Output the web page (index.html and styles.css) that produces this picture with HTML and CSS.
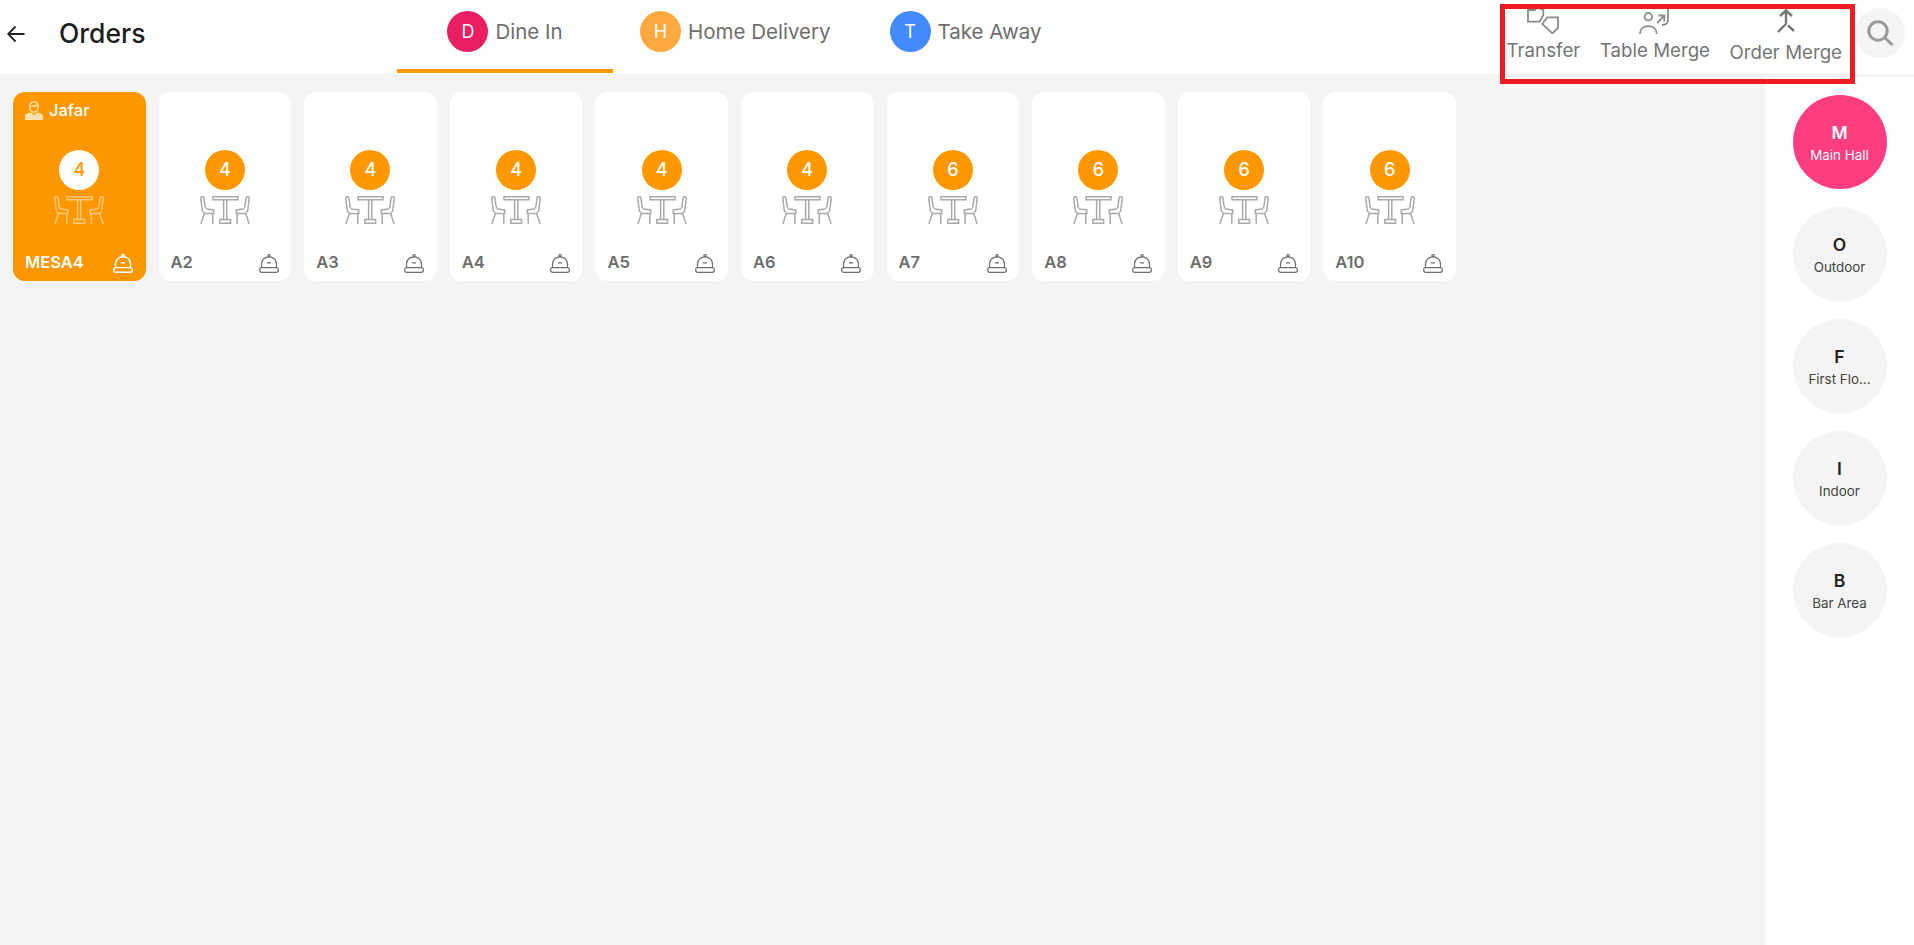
FILE: index.html
```html
<!DOCTYPE html>
<html lang="en">
<head>
  <meta charset="UTF-8">
  <meta name="viewport" content="width=device-width, initial-scale=1.0">
  <title>Orders</title>
  <link rel="stylesheet" href="styles.css">
</head>
<body>
  <svg class="svg-defs" width="0" height="0" aria-hidden="true">
    <symbol id="seat" viewBox="0 0 50 28">
      <path d="M13 .7H38V3.7H13ZM23.6 3.7V23.5M26.8 3.7V23.5M19.8 23.5H30.6V27.2H19.8Z"/>
      <g id="chair">
        <path d="M1.5.8Q3.6.4 4 2.2L5 10Q5.3 12.6 7 13L13.7 14V17.5H5.2Q2.6 17 2.1 13L.8 3Q.7 1.1 1.5.8ZM4.4 17.5L.8 28M12.8 17.5V28"/>
      </g>
      <use href="#chair" transform="matrix(-1 0 0 1 50 0)"/>
    </symbol>
    <symbol id="bell" viewBox="0 0 20 19">
      <circle cx="10" cy="1.6" r="1.1"/>
      <path d="M2.5 13.6V10C2.5 5.6 6 2.8 10 2.8S17.5 5.6 17.5 10V13.6M8 8.8H12"/>
      <rect x=".7" y="13.6" width="18.6" height="4.7" rx="2"/>
    </symbol>
  </svg>

  <header class="topbar">
    <a href="#" class="back-link">
      <svg width="18" height="18" viewBox="0 0 18 18"><path d="M17.5 9H1.5M8.5 1.5L1.2 9L8.5 16.5"/></svg>
    </a>
    <h1 class="page-title">Orders</h1>

    <nav class="tabs">
      <a href="#" class="tab tab-active"><span class="tab-dot dot-dine">D</span>Dine In</a>
      <a href="#" class="tab"><span class="tab-dot dot-home">H</span>Home Delivery</a>
      <a href="#" class="tab"><span class="tab-dot dot-take">T</span>Take Away</a>
    </nav>

    <div class="actions">
      <a href="#" class="action">
        <svg class="action-icon" width="32" height="30" viewBox="0 0 32 30"><path d="M1 6V17.7H12.7L16.3 11V6L9.5 3.5L8 6ZM20.3 13.3H31V24L25.3 29.3L15.3 20Z"/></svg>
        <span class="action-label">Transfer</span>
      </a>
      <a href="#" class="action">
        <svg class="action-icon" width="31" height="30" viewBox="0 0 31 30"><circle cx="9.3" cy="12.7" r="3.7"/><path d="M.9 30C.9 25 4.5 22.2 9.3 22.2S17.7 25 17.7 30M18 19L25 12M19.5 11.5H25.3V17.5M29 1V15.5Q29 21 23 21"/></svg>
        <span class="action-label">Table Merge</span>
      </a>
      <a href="#" class="action action-order">
        <svg class="action-icon icon-dark" width="18" height="30" viewBox="0 0 18 30"><path d="M9 7V20M3 12L9 6.5L15 12M9 20L1 28M11 21.5L17 27"/></svg>
        <span class="action-label">Order Merge</span>
      </a>
    </div>

    <a href="#" class="search-btn">
      <svg width="28" height="28" viewBox="0 0 28 28"><circle cx="12" cy="12" r="9.2"/><path d="M19 19L26.5 26"/></svg>
    </a>
  </header>

  <div class="layout">
    <main class="tables">
      <div class="table-card table-busy">
        <div class="card-user">
          <svg width="18" height="19" viewBox="0 0 18 19"><path class="user-fill" d="M0 19V15.5Q0 13 3 12.3L6 11.5L9 14L12 11.5L15 12.3Q18 13 18 15.5V19Z"/><path class="user-line" d="M4.6 6.2C4.6 2.5 6.5 .8 9 .8S13.4 2.5 13.4 6.2C13.4 9 11.2 11.3 9 11.3S4.6 9 4.6 6.2ZM5 5Q9 5.5 13 4"/></svg>
          <span>Jafar</span>
        </div>
        <span class="seat-count">4</span>
        <svg class="seat-icon"><use href="#seat"/></svg>
        <div class="card-foot">
          <span class="table-name">MESA4</span>
          <svg class="bell-icon"><use href="#bell"/></svg>
        </div>
      </div>

      <div class="table-card">
        <div class="card-user"></div>
        <span class="seat-count">4</span>
        <svg class="seat-icon"><use href="#seat"/></svg>
        <div class="card-foot"><span class="table-name">A2</span><svg class="bell-icon"><use href="#bell"/></svg></div>
      </div>
      <div class="table-card">
        <div class="card-user"></div>
        <span class="seat-count">4</span>
        <svg class="seat-icon"><use href="#seat"/></svg>
        <div class="card-foot"><span class="table-name">A3</span><svg class="bell-icon"><use href="#bell"/></svg></div>
      </div>
      <div class="table-card">
        <div class="card-user"></div>
        <span class="seat-count">4</span>
        <svg class="seat-icon"><use href="#seat"/></svg>
        <div class="card-foot"><span class="table-name">A4</span><svg class="bell-icon"><use href="#bell"/></svg></div>
      </div>
      <div class="table-card">
        <div class="card-user"></div>
        <span class="seat-count">4</span>
        <svg class="seat-icon"><use href="#seat"/></svg>
        <div class="card-foot"><span class="table-name">A5</span><svg class="bell-icon"><use href="#bell"/></svg></div>
      </div>
      <div class="table-card">
        <div class="card-user"></div>
        <span class="seat-count">4</span>
        <svg class="seat-icon"><use href="#seat"/></svg>
        <div class="card-foot"><span class="table-name">A6</span><svg class="bell-icon"><use href="#bell"/></svg></div>
      </div>
      <div class="table-card">
        <div class="card-user"></div>
        <span class="seat-count">6</span>
        <svg class="seat-icon"><use href="#seat"/></svg>
        <div class="card-foot"><span class="table-name">A7</span><svg class="bell-icon"><use href="#bell"/></svg></div>
      </div>
      <div class="table-card">
        <div class="card-user"></div>
        <span class="seat-count">6</span>
        <svg class="seat-icon"><use href="#seat"/></svg>
        <div class="card-foot"><span class="table-name">A8</span><svg class="bell-icon"><use href="#bell"/></svg></div>
      </div>
      <div class="table-card">
        <div class="card-user"></div>
        <span class="seat-count">6</span>
        <svg class="seat-icon"><use href="#seat"/></svg>
        <div class="card-foot"><span class="table-name">A9</span><svg class="bell-icon"><use href="#bell"/></svg></div>
      </div>
      <div class="table-card">
        <div class="card-user"></div>
        <span class="seat-count">6</span>
        <svg class="seat-icon"><use href="#seat"/></svg>
        <div class="card-foot"><span class="table-name">A10</span><svg class="bell-icon"><use href="#bell"/></svg></div>
      </div>
    </main>

    <aside class="areas">
      <a href="#" class="area area-active"><strong>M</strong><span>Main Hall</span></a>
      <a href="#" class="area"><strong>O</strong><span>Outdoor</span></a>
      <a href="#" class="area"><strong>F</strong><span>First Flo...</span></a>
      <a href="#" class="area"><strong>I</strong><span>Indoor</span></a>
      <a href="#" class="area"><strong>B</strong><span>Bar Area</span></a>
    </aside>
  </div>

  <!-- Marcação vermelha sobre as ações -->
  <div class="highlight"></div>
</body>
</html>
```

FILE: styles.css
```css
* {
  box-sizing: border-box;
}
body {
  font-family: Inter, "Noto Sans", sans-serif;
  background-color: #f4f4f4;
  margin: 0;
  height: 100vh;
  overflow: hidden;
  display: flex;
  flex-direction: column;
}
a {
  color: inherit;
  text-decoration: none;
}
.svg-defs {
  position: absolute;
}
.topbar {
  display: flex;
  flex: none;
  height: 74px;
  background-color: white;
}
.back-link {
  margin: 25px 0 0 7px;
  width: 18px;
  height: 18px;
}
.back-link svg {
  display: block;
  fill: none;
  stroke: #222;
  stroke-width: 1.8;
}
.page-title {
  margin: 17px 0 0 34px;
  width: 338px;
  font-size: 26.5px;
  line-height: 32px;
  font-weight: 500;
  color: #1f1f1f;
}
.tabs {
  display: flex;
  gap: 2px;
}
.tab {
  display: flex;
  align-items: flex-start;
  justify-content: center;
  gap: 7px;
  min-width: 216px;
  height: 73px;
  padding: 11px 25px 0;
  font-size: 20.5px;
  line-height: 41px;
  color: #6e6e6e;
  border-bottom: 4px solid transparent;
}
.tab-active {
  border-bottom-color: #ff9800;
}
.tab-dot {
  width: 41px;
  height: 41px;
  border-radius: 50%;
  color: white;
  font-size: 18px;
  text-align: center;
}
.dot-dine {
  background-color: #e91e63;
}
.dot-home {
  background-color: #ffa940;
}
.dot-take {
  background-color: #448aff;
}
.actions {
  display: flex;
  gap: 19.5px;
  margin-left: auto;
  padding-top: 4px;
}
.action {
  display: flex;
  flex-direction: column;
  align-items: center;
  color: #767676;
}
.action-icon {
  display: block;
  flex: none;
  fill: none;
  stroke: #8c8c8c;
  stroke-width: 1.8;
}
.icon-dark {
  stroke: #777;
  stroke-width: 2.4;
}
.action-label {
  margin-top: 6px;
  font-size: 18.7px;
  line-height: 22px;
}
.action-order .action-label {
  margin-top: 8px;
}
.search-btn {
  display: flex;
  align-items: center;
  justify-content: center;
  flex: none;
  width: 50px;
  height: 50px;
  margin: 8px 9px 0 13px;
  border-radius: 50%;
  background-color: #f4f4f4;
}
.search-btn svg {
  fill: none;
  stroke: #9a9a9a;
  stroke-width: 3;
}
.layout {
  display: flex;
  flex: 1;
  min-height: 0;
}
.tables {
  display: flex;
  flex-wrap: wrap;
  align-content: flex-start;
  gap: 13px;
  flex: 1;
  padding: 18px 13px;
}
.table-card {
  display: flex;
  flex-direction: column;
  align-items: center;
  width: 132.6px;
  height: 189px;
  padding: 9px 12px;
  border-radius: 12px;
  background-color: white;
}
.card-user {
  display: flex;
  align-items: flex-start;
  gap: 6px;
  align-self: stretch;
  height: 19px;
  font-size: 16.5px;
  font-weight: 500;
  line-height: 18px;
}
.seat-count {
  flex: none;
  width: 40px;
  height: 40px;
  margin-top: 29.5px;
  border-radius: 50%;
  background-color: #ff9800;
  color: white;
  font-size: 18px;
  font-weight: 500;
  line-height: 40px;
  text-align: center;
}
.seat-icon {
  flex: none;
  width: 50px;
  height: 28px;
  margin-top: 6.5px;
  fill: none;
  stroke: #a9a9a9;
  stroke-width: 1.5;
}
.card-foot {
  display: flex;
  align-items: flex-end;
  justify-content: space-between;
  align-self: stretch;
  margin-top: auto;
}
.table-name {
  font-size: 16.5px;
  font-weight: 600;
  line-height: 20px;
  color: #6e6e6e;
}
.bell-icon {
  display: block;
  width: 20px;
  height: 19px;
  margin-right: 0.5px;
  margin-bottom: -1px;
  fill: none;
  stroke: #6e6e6e;
  stroke-width: 1.2;
}
.table-busy {
  background-color: #ff9800;
  color: white;
}
.table-busy .seat-count {
  background-color: white;
  color: #ff9800;
}
.table-busy .seat-icon {
  stroke: #ffc777;
}
.table-busy .table-name {
  color: white;
}
.table-busy .bell-icon {
  stroke: white;
  stroke-width: 1.4;
}
.user-fill {
  fill: #ffe0b0;
}
.user-line {
  fill: none;
  stroke: #ffe0b0;
  stroke-width: 1.4;
}
.areas {
  display: flex;
  flex-direction: column;
  align-items: center;
  gap: 18px;
  flex: none;
  width: 149px;
  margin-top: 3px;
  padding-top: 18px;
  background-color: white;
}
.area {
  display: flex;
  flex-direction: column;
  align-items: center;
  flex: none;
  width: 94px;
  height: 94px;
  padding-top: 28px;
  border-radius: 50%;
  background-color: #f4f4f4;
  color: #444;
}
.area strong {
  font-size: 17.5px;
  font-weight: 600;
  line-height: 20px;
  color: #222;
}
.area span {
  margin-top: 4px;
  font-size: 13.4px;
  line-height: 16px;
  white-space: nowrap;
}
.area-active {
  background-color: #ff3d7f;
  color: white;
}
.area-active strong {
  color: white;
}
.highlight {
  position: absolute;
  left: 1500px;
  top: 4px;
  width: 355px;
  height: 80px;
  border: 5px solid #ed1c24;
}
```
